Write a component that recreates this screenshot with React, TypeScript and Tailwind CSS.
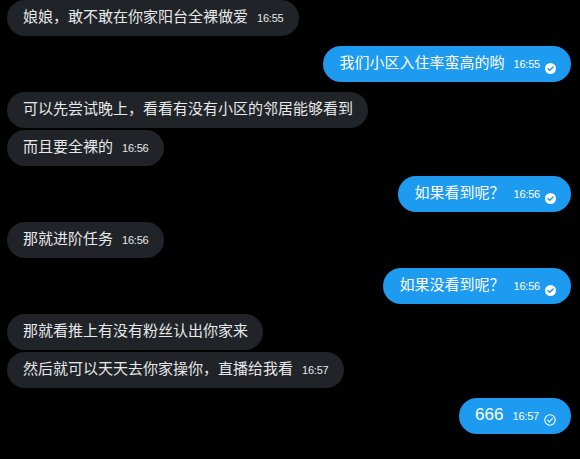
import React from 'react';

type Msg = {
  text: string;
  time?: string;
  mine?: boolean;
  status?: 'read' | 'sent';
};

const messages: Msg[][] = [
  [{ text: '娘娘，敢不敢在你家阳台全裸做爱', time: '16:55' }],
  [{ text: '我们小区入住率蛮高的哟', time: '16:55', mine: true, status: 'read' }],
  [
    { text: '可以先尝试晚上，看看有没有小区的邻居能够看到' },
    { text: '而且要全裸的', time: '16:56' },
  ],
  [{ text: '如果看到呢？', time: '16:56', mine: true, status: 'read' }],
  [{ text: '那就进阶任务', time: '16:56' }],
  [{ text: '如果没看到呢？', time: '16:56', mine: true, status: 'read' }],
  [
    { text: '那就看推上有没有粉丝认出你家来' },
    { text: '然后就可以天天去你家操你，直播给我看', time: '16:57' },
  ],
  [{ text: '666', time: '16:57', mine: true, status: 'sent' }],
];

const ReadIcon = () => (
  <svg width="11" height="11" viewBox="0 0 12 12">
    <circle cx="6" cy="6" r="6" fill="#ffffff" />
    <path d="M3.3 6.2 L5.2 8 L8.8 4.3" fill="none" stroke="#1d9bf0" strokeWidth="1.6" strokeLinecap="round" strokeLinejoin="round" />
  </svg>
);

const SentIcon = () => (
  <svg width="12" height="12" viewBox="0 0 12 12">
    <circle cx="6" cy="6" r="5.2" fill="none" stroke="#ffffff" strokeWidth="1.1" />
    <path d="M3.6 6.1 L5.3 7.8 L8.5 4.4" fill="none" stroke="#ffffff" strokeWidth="1.1" strokeLinecap="round" strokeLinejoin="round" />
  </svg>
);

const Bubble = ({ m }: { m: Msg }) => {
  const isNum = /^[0-9]+$/.test(m.text);
  return (
    <div
      className={`inline-flex items-baseline h-[36px] rounded-[18px] pl-4 pr-[15px] pt-[6px] text-[#e7e9ea] ${
        m.mine ? 'bg-[#1d9bf0] text-white' : 'bg-[#202327]'
      }`}
    >
      <span className={`leading-[22px] ${isNum ? 'text-[17px]' : 'text-[15px]'}`}>{m.text}</span>
      {m.time && (
        <span className="ml-[9px] text-[11px] leading-none tracking-[-0.2px] font-['Liberation_Sans',sans-serif]">
          {m.time}
        </span>
      )}
      {m.status && (
        <span className="ml-[5px] self-center translate-y-[1px]">
          {m.status === 'read' ? <ReadIcon /> : <SentIcon />}
        </span>
      )}
    </div>
  );
};

export default function App() {
  return (
    <div className="w-[580px] h-[459px] bg-black overflow-hidden font-['Liberation_Sans','Noto_Sans_CJK_SC',sans-serif]">
      <div className="flex flex-col gap-[10px] pl-[7px] pr-[9px] pt-0">
        {messages.map((group, gi) => (
          <div key={gi} className={`flex flex-col gap-[2px] ${group[0].mine ? 'items-end' : 'items-start'}`}>
            {group.map((m, i) => (
              <Bubble key={i} m={m} />
            ))}
          </div>
        ))}
      </div>
    </div>
  );
}
